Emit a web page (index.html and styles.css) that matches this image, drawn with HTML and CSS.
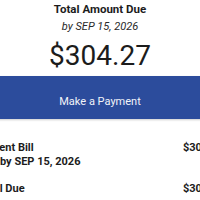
FILE: index.html
```html
<!DOCTYPE html>
<html lang="en">
<head>
    <meta charset="UTF-8">
    <meta name="viewport" content="width=device-width, initial-scale=1.0">
    <title>Billing Summary</title>
    <link rel="stylesheet" href="styles.css">
</head>
<body>
    <div class="page">
        <!-- Amount summary -->
        <div class="summary">
            <div class="summary-title">Total Amount Due</div>
            <div class="summary-date">by SEP 15, 2026</div>
            <div class="summary-amount">$304.27</div>
        </div>

        <button type="button" class="pay-button">Make a Payment</button>

        <!-- Bill breakdown -->
        <div class="bill-list">
            <div class="bill-row">
                <div class="bill-label">
                    <div>Current Bill</div>
                    <div>Due by SEP 15, 2026</div>
                </div>
                <div class="bill-value">$304.27</div>
            </div>
            <div class="bill-row">
                <div class="bill-label">
                    <div>Total Due</div>
                </div>
                <div class="bill-value">$304.27</div>
            </div>
        </div>
    </div>
</body>
</html>
```

FILE: styles.css
```css
body {
    margin: 0;
    background-color: #ffffff;
    font-family: Roboto, 'Liberation Sans', sans-serif;
    color: #1c1c1c;
    overflow: hidden;
}

.page {
    width: 260px;
    margin-left: -30px;
}

.summary {
    text-align: center;
    padding-top: 1px;
}

.summary-title {
    font-size: 11.5px;
    line-height: 16px;
    font-weight: 700;
}

.summary-date {
    margin-top: 2px;
    font-size: 11px;
    line-height: 16px;
    font-style: italic;
    color: #2a2a2a;
}

.summary-amount {
    margin-top: 5px;
    font-size: 28px;
    line-height: 32px;
    color: #1c1c1c;
}

.pay-button {
    display: block;
    width: 100%;
    margin-top: 4px;
    height: 43px;
    padding: 8px 0 0;
    border: none;
    background-color: #2c4c9c;
    color: #f2f4f9;
    font-family: inherit;
    font-size: 11px;
    line-height: 13px;
    box-shadow: 0 1px 2px rgba(0,0,0,0.2);
    cursor: pointer;
}

.bill-list {
    padding: 22px 6px 0 8px;
}

.bill-row {
    display: flex;
    justify-content: space-between;
    font-size: 11px;
    line-height: 14px;
    font-weight: 700;
}

.bill-row + .bill-row {
    margin-top: 13px;
}
```
